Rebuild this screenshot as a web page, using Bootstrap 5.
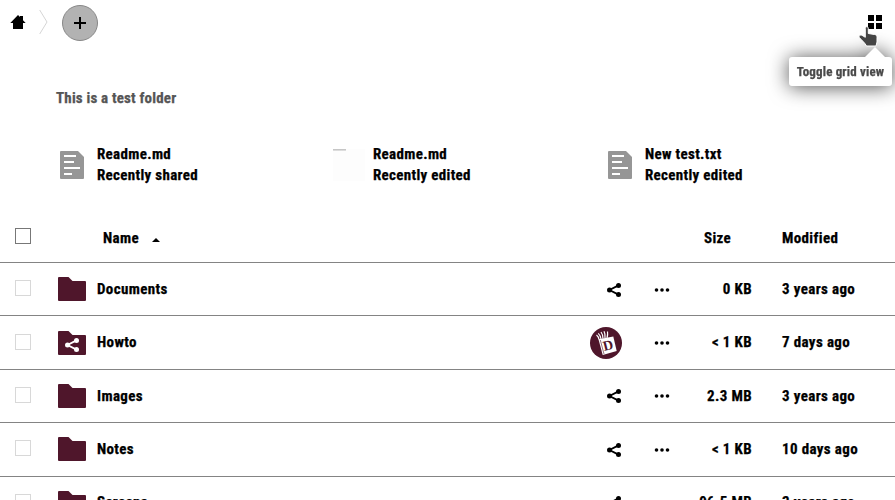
<!DOCTYPE html>
<html lang="en">
<head>
<meta charset="utf-8">
<meta name="viewport" content="width=device-width, initial-scale=1">
<title>Files</title>
<link href="https://cdn.jsdelivr.net/npm/bootstrap@5.3.0/dist/css/bootstrap.min.css" rel="stylesheet">
<style>
body{font-family:Roboto,"Liberation Sans",sans-serif;font-stretch:75%;font-weight:700;font-size:15px;letter-spacing:.36px;-webkit-text-stroke:.25px;line-height:21px;color:#000;height:500px}
svg{display:block;flex:none}
.topbar{height:46px;padding:0 12px 2px 10px}
.crumb-sep{margin:-1px 14px 0 13px}
.add-btn{width:36px;height:36px;border:1px solid #888;background:#b2b2b2;color:#000;margin-top:1px}
.toggle-tip{top:57px;right:3px;width:103px;height:29px;font-size:13px;letter-spacing:.15px;line-height:29px;color:#4a4a4a;background:#fff;border-radius:3px;filter:drop-shadow(0 1px 10px #4d4d4d)}
.toggle-tip::before{content:"";position:absolute;right:7px;top:-10px;border:10px solid transparent;border-top:0;border-bottom-color:#fff}
.pointer{left:858px;top:25px}
.folder-note{color:#555;letter-spacing:.18px;padding:42px 0 0 56px;height:98px}
.recents{height:68px;padding-left:58px;letter-spacing:.32px}
.recent-item{width:275px}
.recent-pic{width:28px;margin-right:11px;padding-top:3px}
.thumb{width:32px;height:32px;background:#fdfdfd;margin:5px 8px 0 0}
.thumb::before{content:"";display:block;width:13px;height:2px;background:linear-gradient(#bbb,#e8e8e8)}
.recent-item.thumbed{width:273px}
.file-row{display:grid;grid-template-columns:58px 39px 1fr 47px 48px 80px 113px;height:53.4px;border-bottom:1px solid #848484;align-items:center}
.file-row>span{padding-top:.4px}
.file-head{height:51px;align-items:start}
.file-head>span,.file-head>div{padding-top:16px}
.head-name{padding-left:6px}
.head-size{padding-left:2px}
.size-cell{text-align:right;padding-right:30px;margin-left:-20px}
.row-act{margin-top:1px}
.form-check-input.pick{width:16px;height:16px;margin:-2px 0 0 15px;border:1px solid #d8d8d8;border-radius:0;display:block}
.file-head .form-check-input.pick{border-color:#777;margin-top:16px}
.avatar{margin-left:-17px}
.avatar text{font:700 14px "Liberation Serif",serif}
.caret{width:0;border:4px solid transparent;border-top:0;border-bottom-color:#000;margin-left:12.5px;margin-top:2px}
</style>
</head>
<body class="overflow-hidden bg-white position-relative">
<svg width="0" height="0" class="position-absolute">
<defs>
<symbol id="folder" viewBox="0 0 28 24"><path fill="#4f162b" d="M1 0h9.500l4 4H27a1 1 0 0 1 1 1v18a1 1 0 0 1-1 1H1a1 1 0 0 1-1-1V1a1 1 0 0 1 1-1z"/></symbol>
<symbol id="share" viewBox="0 0 14 14"><path fill="none" stroke="currentColor" stroke-width="1.8" d="M11.500 2.400 2.500 7l9 4.600"/><circle cx="11.5" cy="2.5" r="2.5" fill="currentColor"/><circle cx="2.5" cy="7" r="2.5" fill="currentColor"/><circle cx="11.5" cy="11.5" r="2.5" fill="currentColor"/></symbol>
<symbol id="dots" viewBox="0 0 16 4"><circle cx="2.5" cy="2" r="1.8"/><circle cx="8" cy="2" r="1.8"/><circle cx="13.5" cy="2" r="1.8"/></symbol>
<symbol id="doc" viewBox="0 0 24 28"><path fill="#969696" d="M1 0h17l6 6v21a1 1 0 0 1-1 1H1a1 1 0 0 1-1-1V1a1 1 0 0 1 1-1z"/><path stroke="#fff" stroke-width="2" d="M4 5h12M4 11h10M4 17h16M4 23h8"/></symbol>
</defs>
</svg>

<header class="topbar d-flex align-items-center">
  <a href="#" class="text-black" aria-label="Home"><svg width="16" height="16" viewBox="0 0 16 16"><path d="M8 1 .3 9H3v6h10V9h2.700L13 6.200V2h-3v1.100z"/></svg></a>
  <svg class="crumb-sep" width="9" height="26" viewBox="0 0 9 26" fill="none" stroke="#d5d5d5"><path d="M.7 1 8 13 .7 25"/></svg>
  <button class="add-btn btn rounded-circle p-0 d-flex align-items-center justify-content-center" aria-label="New"><svg width="12" height="12"><path d="M5 0h2v5h5v2H7v5H5V7H0V5h5z"/></svg></button>
  <a href="#" class="ms-auto text-black" aria-label="Toggle grid view"><svg width="16" height="16"><path d="M1 1h6v6H1zM9 1h6v6H9zM1 9h6v6H1zM9 9h6v6H9z"/></svg></a>
</header>
<div class="toggle-tip position-absolute text-center" role="tooltip">Toggle grid view</div>
<svg class="pointer position-absolute" width="20" height="23" viewBox="0 0 20 23"><path fill="#444" stroke="#fff" stroke-width="1" d="M7.300 3.400C7.300 1.200 10.300 1.200 10.300 3.400V8.500l6.200 1c2.100.4 2.500 1.200 2.500 3V17l-1 4H8.500C7 18 4 15.500 1.500 12.800.3 11 2 9.500 4 10.300L7.300 12.300z"/></svg>

<main>
  <div class="folder-note">This is a test folder</div>
  <section class="recents d-flex">
    <div class="recent-item d-flex"><div class="recent-pic"><svg width="28" height="36" viewBox="-2 -4 28 36"><use href="#doc" width="24" height="28"/></svg></div><div>Readme.md<br>Recently shared</div></div>
    <div class="recent-item thumbed d-flex"><div class="thumb"></div><div>Readme.md<br>Recently edited</div></div>
    <div class="recent-item d-flex"><div class="recent-pic"><svg width="28" height="36" viewBox="-2 -4 28 36"><use href="#doc" width="24" height="28"/></svg></div><div>New test.txt<br>Recently edited</div></div>
  </section>

  <section>
    <div class="file-row file-head">
      <input type="checkbox" class="form-check-input pick" aria-label="Select all"><span></span>
      <div class="d-flex align-items-center"><span class="head-name">Name</span><i class="caret"></i></div>
      <span></span><span></span><span class="head-size">Size</span><span>Modified</span>
    </div>
    <div class="file-row"><input type="checkbox" class="form-check-input pick" aria-label="Select Documents"><svg width="28" height="24"><use href="#folder"/></svg><span>Documents</span><svg class="row-act" width="14" height="14"><use href="#share"/></svg><svg class="row-act" width="16" height="4"><use href="#dots"/></svg><span class="size-cell">0 KB</span><span>3 years ago</span></div>
    <div class="file-row"><input type="checkbox" class="form-check-input pick" aria-label="Select Howto"><svg width="28" height="24"><use href="#folder"/><g color="#fff"><use href="#share" x="7" y="7" width="14" height="14"/></g></svg><span>Howto</span>
      <svg class="avatar row-act" width="32" height="32" viewBox="0 0 32 32"><circle cx="16" cy="16" r="16" fill="#4f162b"/><path fill="#fff" d="M8.500 12.300 23.300 9.500 26.700 24 12.700 28z"/><path fill="none" stroke="#fff" stroke-width="1.200" d="M9 12.500Q8.500 9.500 6.500 8M11 12Q10.500 8.500 8.300 6.300M13 11.700Q13 7.500 11 5M15 11.300Q15.500 7 14 4.300M17 11Q18 7.500 17.500 4.500"/><path stroke="#4f162b" stroke-width=".6" d="M10.300 13 14 27"/><text x="-5" y="4.5" fill="#4f162b" transform="translate(18 18.500) rotate(-14)">D</text></svg>
      <svg class="row-act" width="16" height="4"><use href="#dots"/></svg><span class="size-cell">&lt; 1 KB</span><span>7 days ago</span></div>
    <div class="file-row"><input type="checkbox" class="form-check-input pick" aria-label="Select Images"><svg width="28" height="24"><use href="#folder"/></svg><span>Images</span><svg class="row-act" width="14" height="14"><use href="#share"/></svg><svg class="row-act" width="16" height="4"><use href="#dots"/></svg><span class="size-cell">2.3 MB</span><span>3 years ago</span></div>
    <div class="file-row"><input type="checkbox" class="form-check-input pick" aria-label="Select Notes"><svg width="28" height="24"><use href="#folder"/></svg><span>Notes</span><svg class="row-act" width="14" height="14"><use href="#share"/></svg><svg class="row-act" width="16" height="4"><use href="#dots"/></svg><span class="size-cell">&lt; 1 KB</span><span>10 days ago</span></div>
    <div class="file-row"><input type="checkbox" class="form-check-input pick" aria-label="Select Screens"><svg width="28" height="24"><use href="#folder"/></svg><span>Screens</span><svg class="row-act" width="14" height="14"><use href="#share"/></svg><svg class="row-act" width="16" height="4"><use href="#dots"/></svg><span class="size-cell">96.5 MB</span><span>3 years ago</span></div>
  </section>
</main>
<script src="https://cdn.jsdelivr.net/npm/bootstrap@5.3.0/dist/js/bootstrap.bundle.min.js"></script>
</body>
</html>
